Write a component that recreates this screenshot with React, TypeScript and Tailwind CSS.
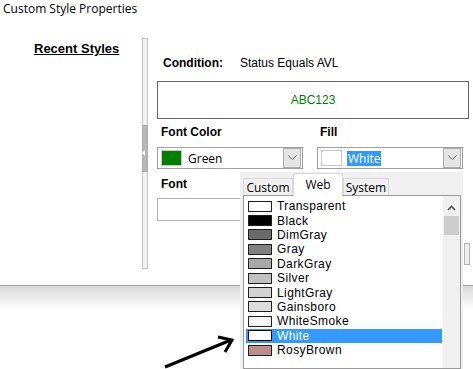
import React from "react";

const items: { name: string; color: string }[] = [
  { name: "Transparent", color: "#ffffff" },
  { name: "Black", color: "#000000" },
  { name: "DimGray", color: "#696969" },
  { name: "Gray", color: "#808080" },
  { name: "DarkGray", color: "#a9a9a9" },
  { name: "Silver", color: "#c0c0c0" },
  { name: "LightGray", color: "#d3d3d3" },
  { name: "Gainsboro", color: "#dcdcdc" },
  { name: "WhiteSmoke", color: "#f5f5f5" },
  { name: "White", color: "#ffffff" },
  { name: "RosyBrown", color: "#bc8f8f" },
];

function Chevron() {
  return (
    <svg width="9" height="6" viewBox="0 0 9 6">
      <polyline points="0.5,0.5 4.5,4.5 8.5,0.5" fill="none" stroke="#606060" strokeWidth="1" />
    </svg>
  );
}

function Combo({ swatch, text, selected }: { swatch: string; text: string; selected?: boolean }) {
  return (
    <div className="w-[146px] h-[22px] border border-[#a0a0a0] bg-white flex items-center pl-[3px] pr-[1px]">
      <div className="w-[21px] h-[16px] border border-[#c8c8c8]" style={{ backgroundColor: swatch }} />
      <div className="flex-1 pl-[5px] flex items-center">
        <span
          className={
            selected
              ? "bg-[#3399ff] text-white px-[1px] leading-[15px] text-[12px] [font-family:'Open_Sans',sans-serif]"
              : "text-black px-[1px] leading-[15px] text-[12px] [font-family:'Open_Sans',sans-serif]"
          }
        >
          {text}
        </span>
      </div>
      <div className="w-[18px] h-[20px] border border-[#adadad] bg-[#e5e5e5] flex items-center justify-center">
        <Chevron />
      </div>
    </div>
  );
}

export default function App() {
  return (
    <div className="relative w-[473px] h-[369px] overflow-hidden bg-white text-black [font-family:'Liberation_Sans',Arial,sans-serif]">
      <div className="h-[286px] border-b border-[#a0a0a0] flex flex-col">
        <div className="h-[20px] pl-[3px] pt-[1px] text-[12px] leading-[16px] [font-family:'Open_Sans',sans-serif]">
          Custom Style Properties
        </div>
        <div className="flex flex-1">
          <div className="w-[142px] pl-[34px] pt-[16px]">
            <span className="text-[13px] font-bold underline leading-[16px]">Recent Styles</span>
          </div>
          <div className="mt-[18px] h-[231px] w-[6px] border border-[#c4c4c4] bg-[#f2f2f2] relative">
            <div className="absolute left-[-1px] top-[86px] w-[6px] h-[47px] bg-[#b8b8b8] border border-[#ababab]" />
            <div className="absolute left-[-1px] top-[111px] w-0 h-0 border-y-[3px] border-y-transparent border-r-[3px] border-r-white" />
          </div>
          <div className="pl-[9px] flex flex-col">
            <div className="pt-[35px] h-[51px] flex text-[12px] leading-[16px]">
              <span className="pl-[6px] w-[83px] font-bold">Condition:</span>
              <span>Status Equals AVL</span>
            </div>
            <div className="mt-[10px] w-[312px] h-[38px] border border-[#646464] flex items-center justify-center text-[12px] text-[#008000]">
              ABC123
            </div>
            <div className="mt-[5px] h-[16px] flex text-[12px] leading-[16px] font-bold">
              <span className="pl-[4px] w-[160px]">Font Color</span>
              <span className="pl-[3px]">Fill</span>
            </div>
            <div className="mt-[7px] flex gap-[14px]">
              <Combo swatch="#008000" text="Green" />
              <Combo swatch="#ffffff" text="White" selected />
            </div>
            <div className="mt-[7px] h-[16px] text-[12px] leading-[16px] font-bold pl-[4px]">Font</div>
            <div className="mt-[6px] w-[146px] h-[23px] border border-[#b4b4b4] bg-white" />
          </div>
        </div>
      </div>
      <div className="h-[24px] bg-gradient-to-b from-[#d9d9d9] to-white" />

      <div className="absolute left-[464px] top-[243px] w-[6px] h-[22px] border border-[#b4b4b4] bg-[#f0f0f0]" />

      {/* Color picker popup */}
      <div className="absolute left-[240px] top-[172px] w-[223px] h-[197px] bg-[#f0f0f0] flex flex-col [font-family:'Open_Sans',sans-serif]">
        <div className="h-[23px] flex items-end pl-[3px] text-[12px]">
          <div className="h-[17px] w-[50px] border border-[#d9d9d9] border-b-0 bg-[#f0f0f0] flex items-center justify-center leading-[15px]">
            Custom
          </div>
          <div className="h-[23px] w-[50px] border border-[#d9d9d9] border-b-0 bg-white flex items-start justify-center pt-[3px] leading-[15px] relative z-10 -mb-[1px]">
            Web
          </div>
          <div className="h-[17px] w-[46px] border border-[#d9d9d9] border-b-0 bg-[#f0f0f0] flex items-center justify-center leading-[15px]">
            System
          </div>
        </div>
        <div className="ml-[3px] mr-[2px] flex-1 border border-[#9a9a9a] bg-white relative [font-family:'Liberation_Sans',Arial,sans-serif]">
          <div className="pt-[3px] pl-[2px] pr-[18px]">
            {items.map((it) => {
              const sel = it.name === "White";
              return (
                <div
                  key={it.name}
                  className={
                    sel
                      ? "h-[14.4px] flex items-center bg-[#3399ff] text-white"
                      : "h-[14.4px] flex items-center text-black"
                  }
                >
                  <div
                    className="ml-[2px] w-[24px] h-[11px] border border-[#1e1e1e]"
                    style={{ backgroundColor: it.color, borderColor: sel ? "#000" : undefined }}
                  />
                  <span className="ml-[5px] text-[12px] leading-[14px] tracking-[0.4px]">{it.name}</span>
                </div>
              );
            })}
          </div>
          <div className="absolute right-0 top-0 bottom-0 w-[17px] bg-[#f0f0f0]">
            <div className="h-[17px] flex items-center justify-center mt-[3px]">
              <svg width="9" height="6" viewBox="0 0 9 6">
                <polyline points="1,5 4.5,1.5 8,5" fill="none" stroke="#505050" strokeWidth="1.6" />
              </svg>
            </div>
            <div className="mx-[1px] h-[19px] bg-[#cdcdcd]" />
          </div>
        </div>
      </div>

      {/* Annotation arrow */}
      <svg className="absolute left-0 top-0" width="473" height="369" viewBox="0 0 473 369">
        <line x1="165" y1="367" x2="231" y2="340" stroke="#000" strokeWidth="3" />
        <polyline points="218,337 232,340 225,352" fill="none" stroke="#000" strokeWidth="3" strokeLinejoin="miter" />
      </svg>
    </div>
  );
}
